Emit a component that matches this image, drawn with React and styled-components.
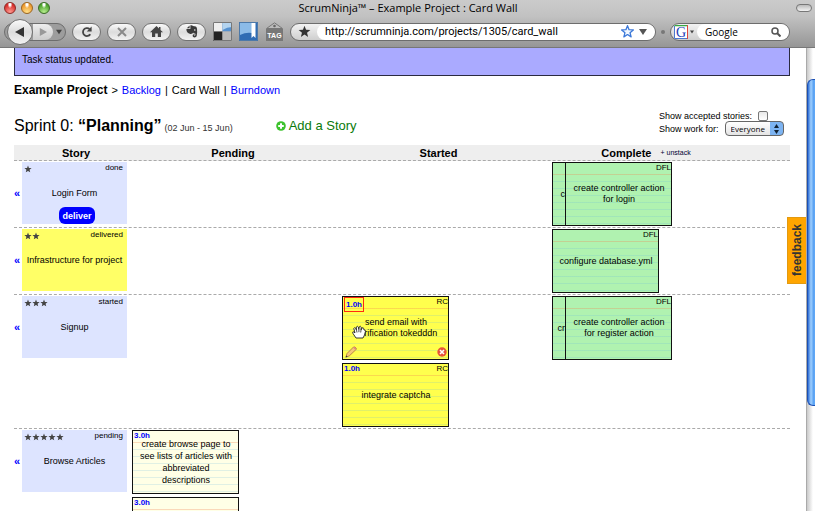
import React from "react";
import styled, { createGlobalStyle, css } from "styled-components";

const GlobalStyle = createGlobalStyle`
  * { box-sizing: border-box; }
  html, body { margin: 0; height: 100%; overflow: hidden; background: #fff; }
  body { font-family: "Liberation Sans", Arial, Helvetica, sans-serif; font-size: 10px; color: #000; }
  a { text-decoration: none; }
  button, input, select { font: inherit; color: inherit; margin: 0; }
`;

const uiFont = '"Open Sans", "Noto Sans", sans-serif';

const Window = styled.div`
  display: flex;
  flex-direction: column;
  height: 100vh;
`;

const Chrome = styled.header`
  flex: none;
  height: 48px;
  background: linear-gradient(#cbcbcb, #c2c2c2 16px, #969696);
  border-bottom: 1px solid #777;
  font-family: ${uiFont};
`;

const TitleBar = styled.div`
  display: grid;
  grid-template-columns: 1fr auto 1fr;
  align-items: center;
  height: 16px;
  padding: 0 3px 0 4px;
`;

const Lights = styled.div`
  display: flex;
  gap: 5px;
`;

const Light = styled.button`
  width: 12px;
  height: 12px;
  padding: 0;
  border: 1px solid ${(p) => p.$edge};
  border-radius: 50%;
  background: radial-gradient(ellipse at 50% 12%, #fff 0 12%, transparent 34%),
    radial-gradient(circle at 50% 90%, ${(p) => p.$glow}, ${(p) => p.$tone} 70%);
`;

const Title = styled.h1`
  margin: 0;
  font-size: 11px;
  line-height: 16px;
  font-weight: 400;
  white-space: nowrap;
`;

const Capsule = styled.button`
  justify-self: end;
  width: 16px;
  height: 8px;
  padding: 0;
  border: 1px solid #777;
  border-radius: 4px;
  background: linear-gradient(#bbb, #f2f2f2);
`;

const ToolBar = styled.nav`
  display: flex;
  align-items: center;
  height: 31px;
  padding: 0 25px 0 4px;
`;

const HistoryGroup = styled.div`
  display: flex;
  align-items: center;
  width: 62px;
  height: 18px;
  margin-right: 6px;
  border-radius: 9px;
  border: 1px solid #6d6d6d;
  background: #9d9d9d;
`;

const silver = css`
  border: 1px solid #727272;
  background: linear-gradient(#fafafa, #dcdcdc 50%, #f2f2f2);
`;

const BackButton = styled.button`
  ${silver}
  flex: none;
  display: grid;
  place-items: center;
  width: 26px;
  height: 26px;
  margin-left: 2px;
  padding: 0;
  border-radius: 50%;
`;

const ForwardButton = styled.button`
  display: grid;
  place-items: center;
  width: 20px;
  height: 16px;
  padding: 0;
  border: 0;
  border-radius: 0 8px 8px 0;
  background: linear-gradient(#eee, #ccc);
`;

const HistoryMenu = styled.button`
  display: grid;
  place-items: center;
  flex: 1;
  height: 16px;
  padding: 0;
  border: 0;
  background: none;
`;

const PillButton = styled.button`
  ${silver}
  display: grid;
  place-items: center;
  width: 29px;
  height: 18px;
  margin-right: 6px;
  padding: 0;
  border-radius: 9px;
`;

const PlainButton = styled.button`
  display: grid;
  place-items: center;
  width: 20px;
  height: 20px;
  margin-right: 6px;
  padding: 0;
  border: 0;
  background: none;
`;

const FieldGroup = styled.div`
  display: flex;
  align-items: center;
  height: 18px;
  border: 1px solid #6d6d6d;
  border-radius: 9px;
  background: linear-gradient(#f2f2f2, #cfcfcf);
  overflow: hidden;
`;

const AddressField = styled(FieldGroup)`
  flex: 1;
  min-width: 0;
`;

const SearchField = styled(FieldGroup)`
  flex: none;
  width: 120px;
`;

const FieldLead = styled.span`
  display: flex;
  align-items: center;
  justify-content: center;
  gap: 2px;
  flex: none;
  width: 26px;
`;

const FieldBody = styled.label`
  display: flex;
  align-items: center;
  gap: 5px;
  flex: 1;
  min-width: 0;
  height: 16px;
  padding: 0 8px;
  border-radius: 8px;
  background: #fff;
`;

const FieldInput = styled.input`
  flex: 1;
  min-width: 0;
  height: 16px;
  padding: 0;
  border: 0;
  outline: 0;
  background: none;
  font-family: ${(p) => p.$face || "inherit"};
  font-size: ${(p) => p.$size};
`;

const Grip = styled.span`
  width: 4px;
  height: 4px;
  margin: 0 5px;
  border-radius: 2px;
  background: #777;
`;

const Viewport = styled.div`
  position: relative;
  display: flex;
  flex: 1;
  min-height: 0;
`;

const Page = styled.main`
  flex: 1;
  min-width: 0;
  padding: 0 16px 0 14px;
  overflow: hidden;
`;

const ScrollTrack = styled.div`
  flex: none;
  width: 9px;
  padding-top: 31px;
  border-left: 1px solid #aaa;
  background: linear-gradient(90deg, #c9c9c9, #fff 6px);
`;

const ScrollThumb = styled.div`
  height: 76%;
  max-height: 327px;
  border: 1px solid #1c50b4;
  border-right: 0;
  border-radius: 6px 0 0 6px;
  background: linear-gradient(90deg, #2f6fd6, #9fd0ff 3px, #4f9af0 6px, #6fb4fb);
`;

const Flash = styled.div`
  height: 28px;
  padding: 6px 7px;
  border: 1px solid #2a2a40;
  border-top: 0;
  background: #aaaaff;
  line-height: 12px;
`;

const Crumbs = styled.nav`
  display: flex;
  align-items: baseline;
  gap: 4px;
  margin-top: 6px;
  font-size: 11px;
  line-height: 16px;

  strong { font-size: 12px; }
  a { color: #0000ff; }
`;

const SprintBar = styled.div`
  display: flex;
  align-items: flex-start;
  height: 47px;
`;

const SprintHead = styled.div`
  display: flex;
  align-items: baseline;
  flex: 1;
  gap: 3px;
  padding-top: 18px;
  line-height: 20px;
`;

const SprintTitle = styled.h2`
  margin: 0;
  font-size: 16px;
  font-weight: 400;
`;

const SprintDates = styled.span`
  font-size: 9px;
  color: #333;
`;

const AddStory = styled.a`
  display: flex;
  align-items: center;
  gap: 3px;
  margin-left: 40px;
  font-size: 13px;
  color: #0a7a0a;
`;

const Filters = styled.form`
  width: 131px;
  padding-top: 11px;
  font-size: 9px;
`;

const FilterRow = styled.label`
  display: flex;
  align-items: center;
  gap: 6px;
  height: 13px;
  white-space: nowrap;
`;

const Tick = styled.input`
  appearance: none;
  width: 10px;
  height: 10px;
  border: 1px solid #777;
  border-radius: 2px;
  background: linear-gradient(#e8e8e8, #fff);
`;

const SelectShell = styled.span`
  display: grid;
  align-items: center;
`;

const PersonSelect = styled.select`
  grid-area: 1 / 1;
  appearance: none;
  width: 59px;
  height: 15px;
  padding: 0 5px;
  border: 1px solid #666;
  border-radius: 4px;
  background: linear-gradient(90deg, transparent 44px, #7db4f2 44px),
    linear-gradient(#fff, #e4e4e4);
  font-family: ${uiFont};
  font-size: 8px;
  line-height: 12px;
`;

const SelectArrows = styled.svg`
  grid-area: 1 / 1;
  justify-self: end;
  margin-right: 4px;
  pointer-events: none;
`;

const Wall = styled.table`
  display: block;
  width: 100%;

  thead, tbody { display: block; }
`;

const WallRow = styled.tr`
  display: grid;
  grid-template-columns: 114fr 210fr 210fr 242fr;
  border-bottom: 1px dashed #aaa;
`;

const HeadRow = styled(WallRow)`
  background: #eeeeee;
`;

const HeadCell = styled.th`
  display: flex;
  align-items: center;
  justify-content: center;
  gap: 9px;
  height: 15px;
  padding: 0 ${(p) => p.$shift || "0"} 0 ${(p) => p.$lead || "0"};
  font-size: 11px;
`;

const Unstack = styled.a`
  font-size: 7px;
  font-weight: 400;
  color: #003;
`;

const StoryCell = styled.td`
  display: grid;
  grid-template-columns: 8px 105px;
  align-items: start;
  padding: 1px 0;
`;

const Collapse = styled.a`
  padding-top: 24px;
  font-size: 11px;
  font-weight: 700;
  line-height: 14px;
  color: #0000ff;
`;

const StoryCard = styled.article`
  height: 62px;
  padding: 0 4px 0 2px;
  background: ${(p) => (p.$state === "delivered" ? "#ffff66" : "#dde4ff")};
`;

const StoryTop = styled.div`
  display: flex;
  justify-content: space-between;
  align-items: center;
  height: 10px;
  font-size: 8px;
`;

const Stars = styled.span`
  display: flex;
  padding-top: 3px;
`;

const StoryName = styled.div`
  margin: 15px -4px 0 -2px;
  font-size: 9px;
  line-height: 12px;
  text-align: center;
  white-space: nowrap;
`;

const Deliver = styled.button`
  display: block;
  width: 36px;
  height: 17px;
  margin: 8px 0 0 35px;
  padding: 0;
  border: 0;
  border-radius: 6px;
  background: #0000ff;
  color: #fff;
  font-size: 9px;
  font-weight: 700;
`;

const TaskCell = styled.td`
  display: flex;
  flex-direction: column;
  gap: 3px;
  padding: 1px 4px;
`;

const Stack = styled.div`
  display: flex;
`;

const paper = {
  green: "#b0f2b0",
  yellow: "#ffff4d",
  cream: "#ffffe6",
};

const cardFace = css`
  height: 64px;
  border: 1px solid #111;
  background:
    linear-gradient(rgba(240, 130, 80, 0.3), rgba(240, 130, 80, 0.3)) 0 11px / 100% 1px no-repeat,
    repeating-linear-gradient(transparent 0 6px, rgba(100, 180, 220, 0.2) 6px 7px) 0 12px / 100% 100% no-repeat,
    ${(p) => paper[p.$paper]};
`;

const CardEdge = styled.div`
  ${cardFace}
  display: flex;
  align-items: center;
  justify-content: flex-end;
  width: 13px;
  border-right: 0;
  font-size: 9px;
  overflow: hidden;
`;

const TaskCard = styled.article`
  ${cardFace}
  position: relative;
  width: 107px;
  padding: 0 0 0 1px;
`;

const TaskTop = styled.div`
  display: flex;
  justify-content: space-between;
  align-items: flex-start;
  height: 8px;
  font-size: 8px;
  line-height: 9px;
`;

const Hours = styled.strong`
  color: #0000ff;
  font-size: 8px;
  ${(p) =>
    p.$boxed &&
    css`
      padding: 2px 1px;
      border: 1px solid #ff2a10;
    `}
`;

const Owner = styled.span`
  margin-left: auto;
`;

const TaskName = styled.div`
  display: flex;
  align-items: center;
  justify-content: center;
  height: 46px;
  font-size: 9px;
  line-height: ${(p) => (p.$lines > 2 ? "12px" : "11px")};
  text-align: center;
  white-space: pre-line;
`;

const CardTools = styled.div`
  display: flex;
  align-items: center;
  justify-content: space-between;
  height: 14px;
  margin-top: -6px;
`;

const CardTool = styled.button`
  display: grid;
  width: 13px;
  height: 13px;
  place-items: center;
  padding: 0;
  border: 0;
  background: none;
`;

const Grab = styled.svg`
  position: absolute;
  left: 9px;
  top: 28px;
`;

const FeedbackTab = styled.button`
  position: absolute;
  top: 169px;
  right: 9px;
  width: 19px;
  height: 67px;
  padding: 0;
  border: 1px solid #e39a10;
  border-right: 0;
  background: #ffa500;
  color: #333;
  font-size: 12px;
  font-weight: 700;
  writing-mode: sideways-lr;
`;

const Star = ({ size = 8, fill = "#444", stroke = "none" }) => (
  <svg width={size} height={size} viewBox="0 0 20 20" aria-hidden="true">
    <path
      d="M10 1l2.4 6.2 6.6.4-5.1 4.2 1.7 6.5L10 14.7l-5.6 3.6 1.7-6.5L1 7.6l6.6-.4z"
      fill={fill}
      stroke={stroke}
      strokeWidth="2"
      strokeLinejoin="round"
    />
  </svg>
);

const Down = ({ width = 6, fill = "#444" }) => (
  <svg width={width} height={width} viewBox="0 0 8 8" aria-hidden="true">
    <path d="M0 1h8L4 7z" fill={fill} />
  </svg>
);

const Toolbar = () => (
  <ToolBar aria-label="Browser">
    <HistoryGroup>
      <BackButton aria-label="Back">
        <svg width="10" height="10" viewBox="0 0 10 10"><path d="M0 5l9-5v10z" fill="#333" /></svg>
      </BackButton>
      <ForwardButton aria-label="Forward">
        <svg width="8" height="8" viewBox="0 0 10 10"><path d="M10 5L1 0v10z" fill="#999" /></svg>
      </ForwardButton>
      <HistoryMenu aria-label="History"><Down /></HistoryMenu>
    </HistoryGroup>
    <PillButton aria-label="Reload">
      <svg width="12" height="12" viewBox="0 0 12 12">
        <path d="M9.3 8.3A4 4 0 1 1 8.6 3" fill="none" stroke="#444" strokeWidth="1.8" />
        <path d="M10.6.6v5H5.8z" fill="#444" />
      </svg>
    </PillButton>
    <PillButton aria-label="Stop">
      <svg width="10" height="10" viewBox="0 0 10 10"><path d="M1 1l8 8M9 1L1 9" stroke="#8a8a8a" strokeWidth="2" /></svg>
    </PillButton>
    <PillButton aria-label="Home">
      <svg width="13" height="12" viewBox="0 0 13 12"><path d="M6.5 0L0 6.3h2V11h3.2V7.5h2.6V11H11V6.3h2L10.5 4V1H9v1.4z" fill="#444" /></svg>
    </PillButton>
    <PillButton aria-label="Clip to notebook">
      <svg width="12" height="13" viewBox="0 0 12 13">
        <path
          d="M3.6.6v2.7H.8zM4.4.3c1.2-.2 2.2 0 2.6.6l2.6.5c.8.2 1.2 1 1.4 2.4.3 2.5.2 5-.3 7.2-.3 1.4-2.4 1.8-3.5 1-1-.8-.6-2.8.8-2.8.6 0 .9.3.9.8-.9 0-.9.8-.2.8.8 0 .9-1.200.5-2.300-1.200.2-1.900-.2-2.100-.9-.4 1.200-1.600 1.600-2.700 1.400C1.500 8.600.3 6.300.4 4.100h4z"
          fill="#3a3a3a"
        />
        <circle cx="8.8" cy="5" r=".8" fill="#eee" />
      </svg>
    </PillButton>
    <PlainButton aria-label="Delicious">
      <svg width="19" height="19" viewBox="0 0 19 19">
        <path d="M0 0h9.5v9.5H0z" fill="#eee" /><path d="M9.5 0H19v9.5H9.5z" fill="#5691cf" />
        <path d="M9.5 0H19v5q-5 0-9.5 3z" fill="#b4d4ef" />
        <path d="M0 9.5h9.5V19H0z" fill="#222" /><path d="M9.5 9.5H19V19H9.5z" fill="#bbb" />
        <path d="M.5.5h18v18H.5z" fill="none" stroke="#777" />
      </svg>
    </PlainButton>
    <PlainButton aria-label="Bookmarks">
      <svg width="19" height="19" viewBox="0 0 19 19">
        <path d="M0 0h19v19H0z" fill="#2f6cb4" /><path d="M1 1h12v10Q7 10 1 13z" fill="#8bbbe8" />
        <path d="M12.500 1h4v15l-2-2-2 2z" fill="#fff" />
        <path d="M.5.5h18v18H.5z" fill="none" stroke="#4d79a8" />
      </svg>
    </PlainButton>
    <PlainButton aria-label="Tag">
      <svg width="17" height="19" viewBox="0 0 17 19">
        <path d="M.5 6.5L8.5.8l8 5.7z" fill="#bbb" stroke="#777" />
        <circle cx="8.5" cy="4" r="1.3" fill="#666" />
        <path d="M0 7h17v12H0z" fill="#777" />
        <text x="8.5" y="16" textAnchor="middle" fontFamily="Liberation Sans" fontWeight="700" fontSize="7" fill="#fff">TAG</text>
      </svg>
    </PlainButton>
    <AddressField>
      <FieldLead><Star size={13} fill="#333" /></FieldLead>
      <FieldBody>
        <FieldInput $face="Roboto, sans-serif" $size="11px" aria-label="Address" defaultValue="http://scrumninja.com/projects/1305/card_wall" />
        <Star size={13} fill="#f2f8ff" stroke="#3c78d8" />
        <Down width={8} fill="#555" />
      </FieldBody>
    </AddressField>
    <Grip />
    <SearchField>
      <FieldLead>
        <svg width="14" height="14" viewBox="0 0 14 14">
          <path d="M0 0h14v14H0z" fill="#fff" />
          <path d="M0 .5h13" stroke="#3aa845" strokeWidth="1.5" /><path d="M13.5 0v14" stroke="#e0473c" />
          <path d="M.5 1v13M0 13.5h13" stroke="#4b78d0" />
          <text x="7" y="12" textAnchor="middle" fontFamily="Liberation Serif" fontSize="14" fill="#2440b8">G</text>
        </svg>
        <Down width={4} />
      </FieldLead>
      <FieldBody>
        <FieldInput $size="10px" aria-label="Search" defaultValue="Google" />
        <svg width="10" height="10" viewBox="0 0 10 10"><circle cx="4" cy="4" r="3" fill="none" stroke="#555" strokeWidth="1.5" /><path d="M6 6l3.5 3.5" stroke="#555" strokeWidth="2" /></svg>
      </FieldBody>
    </SearchField>
  </ToolBar>
);

const Story = ({ stars, state, name, deliver }) => (
  <StoryCell>
    <Collapse href="#" aria-label="Collapse story">«</Collapse>
    <StoryCard $state={state}>
      <StoryTop>
        <Stars>{Array.from({ length: stars }, (_, i) => <Star key={i} />)}</Stars>
        {state}
      </StoryTop>
      <StoryName>{name}</StoryName>
      {deliver && <Deliver>deliver</Deliver>}
    </StoryCard>
  </StoryCell>
);

const Task = ({ paper: tone, hours, owner, name, behind, active }) => (
  <Stack>
    {behind && <CardEdge $paper={tone}>{behind}</CardEdge>}
    <TaskCard $paper={tone}>
      <TaskTop>
        {hours && <Hours $boxed={active}>{hours}</Hours>}
        {owner && <Owner>{owner}</Owner>}
      </TaskTop>
      {name && <TaskName $lines={name.split("\n").length}>{name}</TaskName>}
      {active && (
        <>
          <CardTools>
            <CardTool aria-label="Edit task">
              <svg width="12" height="12" viewBox="0 0 12 12">
                <path d="M1 11l1-3.5L8.5 1q1.5-.5 2.500 1T10.500 4L4.200 10z" fill="#f5c878" stroke="#a8743a" strokeWidth=".8" />
                <path d="M8 1.500l2.500 2.500q1.200-1 .2-2.200T8 1.500z" fill="#e08a78" /><path d="M.6 11.400l.6-2 1.400 1.400z" fill="#333" />
              </svg>
            </CardTool>
            <CardTool aria-label="Delete task">
              <svg width="10" height="10" viewBox="0 0 10 10"><circle cx="5" cy="5" r="4.7" fill="#e8533a" /><path d="M3 3l4 4M7 3L3 7" stroke="#fff" strokeWidth="1.6" /></svg>
            </CardTool>
          </CardTools>
          <Grab width="14" height="14" viewBox="0 0 14 14" aria-hidden="true">
            <path d="M4 13L1 8.500q-1-2 .8-1.700L3 8 1.800 3.500q.5-1.500 1.800-.3L4.400 5 4.300 2q1-1.500 2 0L6.800 4.500 7.300 1.700q1.200-1 1.900.3L9 5l1-2q1.500-.8 1.700.7L12 5q1.600-.3 1.500 1.200L12.500 10 11 13z" fill="#fff" stroke="#222" strokeWidth=".9" />
            <path d="M4.500 5l.5 2.500M6.900 4.500v2.700M9 5l-.3 2.500" stroke="#222" strokeWidth=".8" />
          </Grab>
        </>
      )}
    </TaskCard>
  </Stack>
);

const rows = [
  {
    story: { stars: 1, state: "done", name: "Login Form", deliver: true },
    complete: [{ paper: "green", owner: "DFL", behind: "c", name: "create controller action\nfor login" }],
  },
  {
    story: { stars: 2, state: "delivered", name: "Infrastructure for project" },
    complete: [{ paper: "green", owner: "DFL", name: "configure database.yml" }],
  },
  {
    story: { stars: 3, state: "started", name: "Signup" },
    started: [
      { paper: "yellow", hours: "1.0h", owner: "RC", name: "send email with\nverification tokedddn", active: true },
      { paper: "yellow", hours: "1.0h", owner: "RC", name: "integrate captcha" },
    ],
    complete: [{ paper: "green", owner: "DFL", behind: "cr", name: "create controller action\nfor register action" }],
  },
  {
    story: { stars: 5, state: "pending", name: "Browse Articles" },
    pending: [
      { paper: "cream", hours: "3.0h", name: "create browse page to\nsee lists of articles with\nabbreviated\ndescriptions" },
      { paper: "cream", hours: "3.0h" },
    ],
  },
];

export default function App() {
  return (
    <Window>
      <GlobalStyle />
      <Chrome>
        <TitleBar>
          <Lights>
            <Light aria-label="Close" $tone="#d8302c" $glow="#ff9a90" $edge="#8c2a26" />
            <Light aria-label="Minimise" $tone="#ee9a2e" $glow="#ffe08a" $edge="#9a6420" />
            <Light aria-label="Zoom" $tone="#4fa52e" $glow="#b8ee90" $edge="#3a6a26" />
          </Lights>
          <Title>ScrumNinja™ – Example Project : Card Wall</Title>
          <Capsule aria-label="Toggle toolbar" />
        </TitleBar>
        <Toolbar />
      </Chrome>
      <Viewport>
        <Page>
          <Flash role="status">Task status updated.</Flash>
          <Crumbs aria-label="Project">
            <strong>Example Project</strong>
            <span>&gt;</span>
            <a href="#backlog">Backlog</a>
            <span>|</span>
            <span>Card Wall</span>
            <span>|</span>
            <a href="#burndown">Burndown</a>
          </Crumbs>
          <SprintBar>
            <SprintHead>
              <SprintTitle>Sprint 0: <b>“Planning”</b></SprintTitle>
              <SprintDates>(02 Jun - 15 Jun)</SprintDates>
              <AddStory href="#add">
                <svg width="10" height="10" viewBox="0 0 10 10" aria-hidden="true"><circle cx="5" cy="5" r="4.8" fill="#3cc22c" /><path d="M5 2.2v5.6M2.2 5h5.6" stroke="#fff" strokeWidth="2" /></svg>
                Add a Story
              </AddStory>
            </SprintHead>
            <Filters>
              <FilterRow>
                Show accepted stories:
                <Tick type="checkbox" />
              </FilterRow>
              <FilterRow>
                Show work for:
                <SelectShell>
                  <PersonSelect defaultValue="Everyone"><option>Everyone</option></PersonSelect>
                  <SelectArrows width="7" height="10" viewBox="0 0 7 10" aria-hidden="true"><path d="M3.5 0L6 4H1zM3.5 10L6 6H1z" fill="#123" /></SelectArrows>
                </SelectShell>
              </FilterRow>
            </Filters>
          </SprintBar>
          <Wall>
            <thead>
              <HeadRow>
                <HeadCell $lead="10px">Story</HeadCell>
                <HeadCell>Pending</HeadCell>
                <HeadCell $shift="9px">Started</HeadCell>
                <HeadCell $shift="46px">Complete <Unstack href="#unstack">+ unstack</Unstack></HeadCell>
              </HeadRow>
            </thead>
            <tbody>
              {rows.map((row) => (
                <WallRow key={row.story.name}>
                  <Story {...row.story} />
                  {["pending", "started", "complete"].map((lane) => (
                    <TaskCell key={lane}>
                      {(row[lane] || []).map((task, i) => <Task key={i} {...task} />)}
                    </TaskCell>
                  ))}
                </WallRow>
              ))}
            </tbody>
          </Wall>
        </Page>
        <ScrollTrack><ScrollThumb /></ScrollTrack>
        <FeedbackTab>feedback</FeedbackTab>
      </Viewport>
    </Window>
  );
}
